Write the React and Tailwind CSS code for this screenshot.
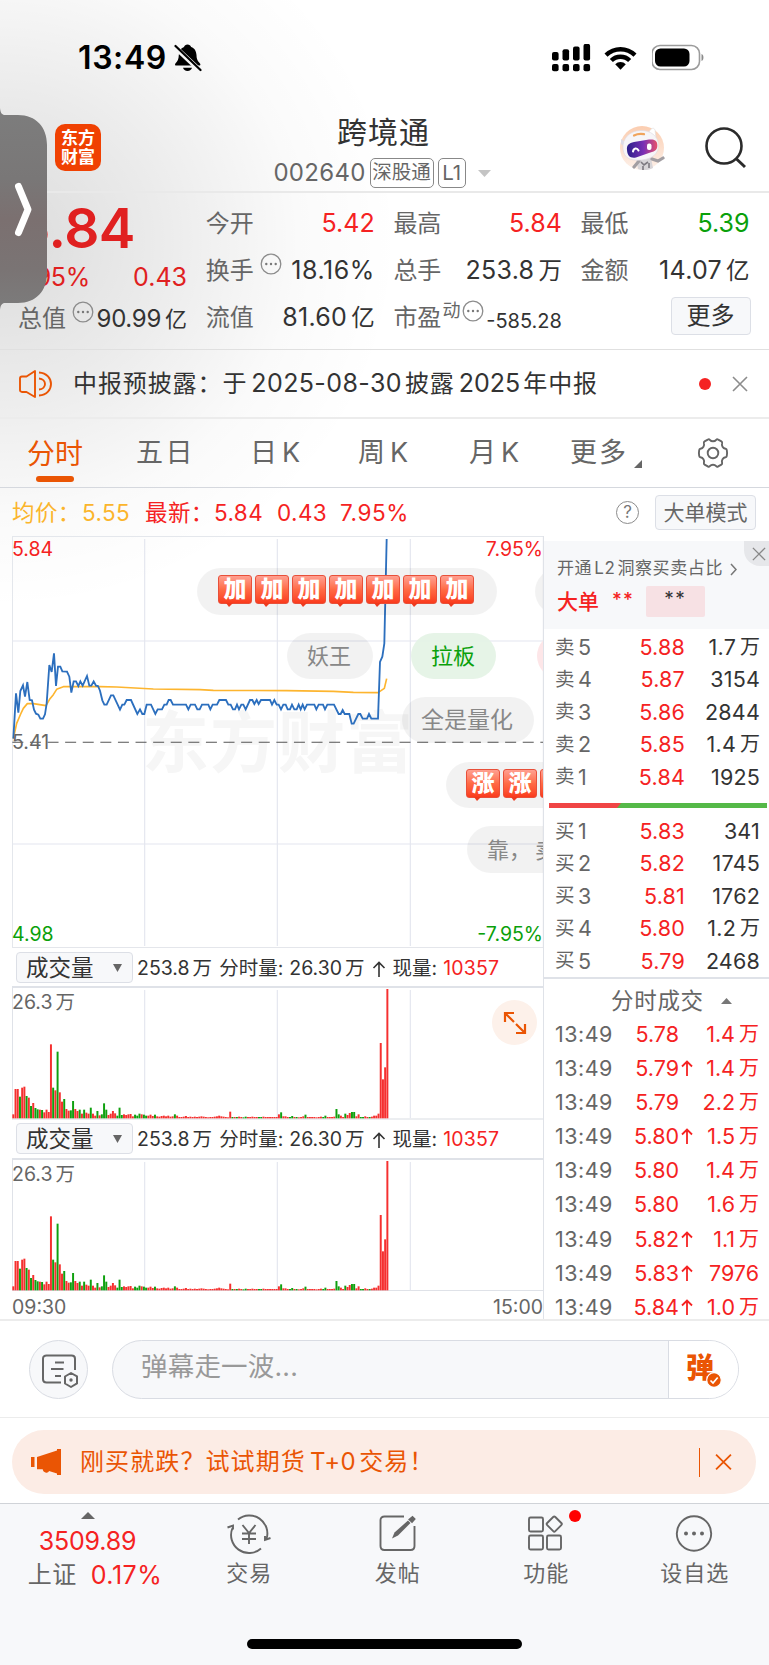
import React from 'react';
import clsx from 'clsx';

const PRICE_LINE =
  '40,626 48,490 55,548 61,483 69,466 75,500 82,456 89,510 96,511 102,539 108,551 115,554 121,566 129,566 135,553 140,520 148,405 155,426 162,370 168,468 174,410 181,410 187,424 201,425 208,440 214,488 221,454 228,454 235,468 241,454 248,467 261,438 268,467 274,467 281,454 288,467 294,468 300,482 307,511 313,524 320,524 333,496 340,496 360,539 367,524 373,524 380,510 393,510 412,552 420,538 427,552 433,552 440,524 453,524 466,552 473,538 486,538 493,524 500,524 506,510 512,510 519,524 558,524 565,538 572,524 585,524 592,538 599,538 606,524 625,524 631,538 638,524 651,524 658,510 678,510 685,524 692,524 699,538 705,538 711,524 717,538 724,524 730,524 737,538 750,510 757,510 763,522 770,510 776,522 783,510 810,510 816,524 823,510 830,524 836,524 843,538 850,524 857,524 863,538 870,538 876,524 883,538 890,538 896,524 902,538 908,524 914,538 921,524 943,524 949,538 956,524 969,524 975,538 982,524 1002,524 1016,552 1022,552 1028,540 1034,552 1048,552 1055,581 1061,581 1075,552 1081,552 1088,566 1101,566 1107,552 1114,566 1134,566 1140,396 1147,380 1153,340 1160,27';

const AVG_LINE =
  '40,626 50,580 62,552 70,535 82,521 100,521 138,527 150,506 160,494 170,478 190,470 300,470 350,471 460,477 600,479 640,481 860,482 1000,484 1060,487 1134,488 1143,482 1153,475 1160,446';

// one entry per minute: r = up, g = down
const VOLUME = (
  'r12 r88 r88 g65 r92 r95 g67 r62 g37 r46 g31 g27 r26 g25 r18 r26 r19 r222 g92 r84 g200 r78 r50 g58 r28 r23 g24 g52 r28 r22 ' +
  'g26 r14 g26 r17 r14 g32 r14 r8 g22 r9 g12 g45 g26 r10 r14 r22 r15 g8 g32 g10 r12 r10 r12 r13 r6 g11 g8 g14 r12 g11 ' +
  'g8 r8 r11 r7 g11 r6 r5 r7 r8 r6 r8 r5 r6 g12 r8 r4 r4 r5 r7 r4 r5 r4 r5 r4 r5 r6 r5 r4 r3 r4 ' +
  'r4 r5 r6 r8 r6 r5 r4 r3 r20 g4 r4 g4 r5 r4 g3 g5 r4 r4 r5 r4 r4 g4 g4 r5 r4 r4 r4 r4 r4 r4 ' +
  'r12 g18 r6 r6 r4 g4 g7 r4 g4 r3 r4 r6 g11 r4 r4 r4 r4 r3 r4 r5 g4 g8 r4 r4 r4 r5 g28 g12 r8 r4 ' +
  'g14 r10 r16 g19 g19 r6 r12 g4 g4 r6 r4 g4 r5 r8 r8 r14 r226 r117 r153 r388'
).split(' ');

const SELLS = [
  ['5', '5.88', '1.7', true],
  ['4', '5.87', '3154'],
  ['3', '5.86', '2844'],
  ['2', '5.85', '1.4', true],
  ['1', '5.84', '1925'],
];

const BUYS = [
  ['1', '5.83', '341'],
  ['2', '5.82', '1745'],
  ['3', '5.81', '1762'],
  ['4', '5.80', '1.2', true],
  ['5', '5.79', '2468'],
];

const TICKS = [
  ['5.78', false, '1.4', true],
  ['5.79', true, '1.4', true],
  ['5.79', false, '2.2', true],
  ['5.80', true, '1.5', true],
  ['5.80', false, '1.4', true],
  ['5.80', false, '1.6', true],
  ['5.82', true, '1.1', true],
  ['5.83', true, '7976', false],
  ['5.84', true, '1.0', true],
];

const DotsIcon = ({ className }) => (
  <svg className={clsx('h-[22px] w-[22px] shrink-0', className)} viewBox="0 0 22 22" fill="none">
    <circle cx="11" cy="11" r="9.8" stroke="#8c8c8c" strokeWidth="1.3" />
    <circle cx="6.3" cy="11" r="1.2" fill="#777" />
    <circle cx="11" cy="11" r="1.2" fill="#777" />
    <circle cx="15.7" cy="11" r="1.2" fill="#777" />
  </svg>
);

const CloseIcon = ({ className, width = 1.6 }) => (
  <svg className={className} viewBox="0 0 16 16" fill="none" stroke="currentColor" strokeWidth={width}>
    <path d="M1 1L15 15M15 1L1 15" />
  </svg>
);

const StatusBar = () => (
  <div className="flex h-[108px] items-center pl-[78px] pr-[64px] pt-[7px] text-black">
    <span className="text-[32px] font-semibold leading-none tracking-[0.6px]">13:49</span>
    <svg className="ml-[7px] h-[28px] w-[28px]" viewBox="0 0 28 28">
      <path d="M13.5 0.5c1.800 0 3.200 1 3.600 2.400 3.600 1.200 5.200 4.300 5.400 8.100.1 4.500 1.300 6.300 3.500 8.400.7.800.5 2.100-.7 2.100H2.200c-1.300 0-1.500-1.300-.8-2.100 2.200-2.100 3.300-4 3.400-8.400.2-3.800 1.700-6.900 5.200-8.100.4-1.400 1.800-2.400 3.500-2.400z" />
      <path d="M9 23.800h9c-.5 1.900-2.200 3.200-4.500 3.200s-4-1.300-4.500-3.200z" />
      <path d="M0 2L27 27.500" stroke="#f6f6f6" strokeWidth="5" />
      <path d="M1.500 2L26.500 26" stroke="#000" strokeWidth="2.2" strokeLinecap="round" />
    </svg>
    <svg className="ml-auto h-[28px] w-[39px]" viewBox="0 0 39 28">
      {[0, 1, 2, 3].map((i) => (
        <g key={i}>
          <rect x={i * 10.5} y={8 - i * 2.7} width="6.6" height={8.5 + i * 2.7} rx="2" />
          <rect x={i * 10.5} y="20" width="6.6" height="7.2" rx="2" />
        </g>
      ))}
    </svg>
    <svg className="ml-[13px] h-[25px] w-[33px]" viewBox="0 0 33 25">
      <path d="M0.5 8.5a23 23 0 0 1 32 0l-3 3.300a18.500 18.500 0 0 0-26 0z" />
      <path d="M5.800 13.900a15.200 15.200 0 0 1 21.400 0l-3.100 3.200a10.800 10.800 0 0 0-15.200 0z" />
      <path d="M11.200 19.200a7.600 7.600 0 0 1 10.600 0L16.500 24.700z" />
    </svg>
    <svg className="ml-[15px] mr-[-1px] h-[27px] w-[54px]" viewBox="0 0 54 27">
      <rect x="0" y="1.5" width="47.5" height="24" rx="8" fill="none" stroke="#9b9b9b" strokeWidth="1.6" />
      <rect x="3" y="4.5" width="34.5" height="18" rx="5.5" />
      <path d="M49.5 10c2.600.8 2.600 6.200 0 7z" fill="#8a8a8a" />
    </svg>
  </div>
);

const Robot = () => (
  <svg className="h-[46px] w-[46px]" viewBox="0 0 46 46">
    <defs>
      <linearGradient id="visor" x1="0" x2="1">
        <stop offset="0" stopColor="#2b1f8a" />
        <stop offset=".55" stopColor="#7a2fb5" />
        <stop offset="1" stopColor="#e8506a" />
      </linearGradient>
      <linearGradient id="halo" x1="0" x2="0" y1="0" y2="1">
        <stop offset="0" stopColor="#fbcdb0" />
        <stop offset="1" stopColor="#fdf1ea" />
      </linearGradient>
    </defs>
    <circle cx="23" cy="23" r="22" fill="url(#halo)" />
    <path d="M17 33h15l2 10c-3 2-10 3-15 1z" fill="#d8d5d8" />
    <path d="M20 36l-5 6M33 34l6 2 5-3" stroke="#a29ea2" strokeWidth="3.2" fill="none" strokeLinecap="round" />
    <path d="M22 37l3 3 4-3M24 41v4M30 38v5" stroke="#7d7980" strokeWidth="1.6" fill="none" />
    <path d="M30 7c2-4 5-5 6-2l1 8-5-2z" fill="#fff" stroke="#ddd" strokeWidth=".6" />
    <path d="M2 14l3 2 1 6-4-3z" fill="#dcdce6" />
    <path d="M4 24C3 13 11 6 21 5.500c11-.5 18 6 18.500 14 .5 9-6 14.500-17 15.500C11 36 5 33 4 24z" fill="#f6f5f8" stroke="#ddd9df" strokeWidth=".6" />
    <path d="M8 25c-.5-5 2-7 7-8l15-2.500c5.500-.5 8 1 8.300 5 .4 5-2 7-7 8L17 32.500c-5.500.8-8.500-1-9-7.500z" fill="url(#visor)" />
    <path d="M14 26.500c.6-3.500 4-4 5.500-1" stroke="#fff" strokeWidth="2" fill="none" strokeLinecap="round" />
    <rect x="28" y="18.500" width="4.500" height="6.500" rx="2" fill="#fff" />
    <path d="M15 10.500c3-1.500 7-1.800 10-1.300" stroke="#f0a45c" strokeWidth="2.200" fill="none" strokeLinecap="round" />
  </svg>
);

const Header = () => (
  <div className="grid h-[85px] grid-cols-[200px_369px_200px] border-b-2 border-[#e9e9e9]">
    <div className="pl-[55px] pt-[16px]">
      <div className="flex h-[47px] w-[46px] flex-col items-center justify-center rounded-[10px] bg-[#f04102] text-[17px] font-bold leading-[19px] text-white">
        <span>东方</span>
        <span>财富</span>
      </div>
    </div>
    <div className="flex flex-col items-center pt-[6px]">
      <h1 className="-ml-[2px] text-[30px] leading-[36px] tracking-[1px] text-[#333]">跨境通</h1>
      <div className="-ml-[5px] mt-[8px] flex h-[30px] items-center text-[#666]">
        <span className="text-[24px] tracking-[0.3px]">002640</span>
        <span className="ml-[4px] flex h-[30px] w-[64px] items-center justify-center rounded-[5px] border border-[#888] text-[19.5px]">深股通</span>
        <span className="ml-[4px] flex h-[30px] w-[28px] items-center justify-center rounded-[5px] border border-[#888] text-[20.5px]">L1</span>
        <svg className="ml-[12px] h-[7px] w-[13px]" viewBox="0 0 13 7">
          <path d="M0 0h13L6.5 7z" fill="#c4c4c4" />
        </svg>
      </div>
    </div>
    <div className="flex items-start pl-[50px] pt-[17px]">
      <Robot />
      <svg className="ml-[40px] mt-px h-[43px] w-[43px]" viewBox="0 0 43 43" fill="none" stroke="#2b2b2b" strokeWidth="2.6">
        <circle cx="19" cy="20" r="17.5" />
        <path d="M31 32.5l9 8.5" strokeWidth="3" />
      </svg>
    </div>
  </div>
);

const Quote = ({ label, value, unit, color = 'text-[#333]', dots }) => (
  <div className="flex h-[47px] items-center">
    <span className="text-[24px] text-[#666]">{label}</span>
    {dots && <DotsIcon className="mb-[14px] ml-[6px]" />}
    <span className={clsx('ml-auto text-[25px]', color, dots && 'tracking-[0.5px]', unit && 'tracking-[0.3px]')}>{value}</span>
    {unit && <span className="ml-[4px] text-[23.5px] text-[#333]">{unit}</span>}
  </div>
);

const Quotes = () => (
  <div className="grid h-[157px] grid-cols-[169px_169px_168.5px_169px] gap-x-[18.700px] border-b border-[#e0e0e0] pl-[18px] pt-[7px]">
    <div className="text-[#e02020]">
      <div className="flex h-[56px] items-center justify-end pr-[52px] text-[55px] font-semibold tracking-[-0.5px]">5.84</div>
      <div className="flex h-[43px] items-center text-[25px]">
        <span className="w-[72px] whitespace-nowrap text-right">
          <span className="-ml-6 tracking-[-0.3px]">7.95%</span>
        </span>
        <span className="ml-auto">0.43</span>
      </div>
      <div className="flex h-[40px] items-center whitespace-nowrap text-[#333]">
        <span className="text-[24px] text-[#666]">总值</span>
        <DotsIcon className="mb-[14px] ml-[6px]" />
        <span className="ml-auto text-[24px] tracking-[-0.3px]">90.99</span>
        <span className="ml-[4px] text-[22px]">亿</span>
      </div>
    </div>
    <div>
      <Quote label="今开" value="5.42" color="text-[#f52222]" />
      <Quote label="换手" value="18.16%" dots />
      <Quote label="流值" value="81.60" unit="亿" />
    </div>
    <div>
      <Quote label="最高" value="5.84" color="text-[#f52222]" />
      <Quote label="总手" value="253.8" unit="万" />
      <div className="flex h-[47px] items-center text-[#666]">
        <span className="text-[24px]">市盈</span>
        <span className="mb-[15px] ml-px text-[18px]">动</span>
        <DotsIcon className="mb-[14px] ml-[2px]" />
        <span className="ml-auto mt-[6px] text-[20px] text-[#333]">-585.28</span>
      </div>
    </div>
    <div>
      <Quote label="最低" value="5.39" color="text-[#0aa00a]" />
      <Quote label="金额" value="14.07" unit="亿" />
      <div className="ml-[90px] mt-[3px] flex h-[38px] w-[80px] items-center justify-center rounded-[4px] border border-[#dcdfe6] bg-[#f7f8fa] text-[24px] text-[#333]">
        更多
      </div>
    </div>
  </div>
);

const Notice = () => (
  <div className="flex h-[69px] items-center border-b-2 border-[#ececec] pl-[19px] pr-[21px]">
    <svg className="h-[30px] w-[34px]" viewBox="0 0 34 30" fill="none" stroke="#ea5504" strokeWidth="1.9" strokeLinejoin="round">
      <path d="M3 7.500h4.500L16 2v26l-8.500-5H3c-1.200 0-2-.8-2-2V9.500c0-1.200.8-2 2-2z" />
      <path d="M20 3.500c16 1 16 22 0 23" />
      <path d="M20 9.500c8 .5 8 10.500 0 11" />
    </svg>
    <span className="ml-[20px] flex items-center text-[24px] tracking-[0.9px] text-[#333]">
      中报预披露：于
      <span className="ml-[4px] text-[25px] tracking-[0.4px]">2025-08-30</span>
      <span className="ml-[3px]">披露</span>
      <span className="ml-[4px] text-[25px] tracking-[0px]">2025</span>
      <span className="ml-[3px]">年中报</span>
    </span>
    <span className="ml-auto h-[12px] w-[12px] rounded-full bg-[#f52222]" />
    <CloseIcon className="ml-[21px] h-[16px] w-[16px] text-[#8c8c8c]" />
  </div>
);

const Tabs = () => (
  <div className="grid h-[69px] grid-cols-[110px_107px_116px_104px_112px_105px_115px] items-center border-b border-[#d5d8de] pt-px text-[27px] text-[#666]">
    <div className="relative flex h-full items-center justify-center text-[28px] text-[#ea5504]">
      分时
      <span className="absolute bottom-[5px] left-[36px] h-[6px] w-[38px] rounded-full bg-[#ea5504]" />
    </div>
    <span className="pl-[26px] tracking-[2.5px]">五日</span>
    <span className="pl-[33px] tracking-[-1px]">日<span className="ml-[6px]">K</span></span>
    <span className="pl-[25px] tracking-[-1px]">周<span className="ml-[6px]">K</span></span>
    <span className="pl-[32px] tracking-[-1px]">月<span className="ml-[6px]">K</span></span>
    <span className="flex items-center pl-[21px] tracking-[2px]">
      更多
      <svg className="ml-[6px] mt-[20px] h-[8px] w-[8px] shrink-0" viewBox="0 0 8 8">
        <path d="M8 0v8H0z" fill="#666" />
      </svg>
    </span>
    <svg className="-mt-px ml-[43px] h-[32px] w-[32px]" viewBox="0 0 32 32" fill="none" stroke="#666" strokeWidth="1.9">
      <circle cx="16" cy="16" r="5.3" />
      <path strokeLinejoin="round" d="M10.800 2.600c.7-.5 1.500-.4 2 .2 1.700 2 4.700 2 6.400 0 .5-.6 1.300-.7 2-.2l3.200 1.800c.7.400.9 1 .7 1.800-.8 2.400.8 5 3.400 5.500.8.200 1.200.7 1.300 1.400.4 2 .4 3.800 0 5.800-.1.700-.5 1.200-1.300 1.400-2.600.5-4.200 3.100-3.400 5.500.2.800 0 1.400-.7 1.800l-3.200 1.800c-.7.500-1.500.400-2-.2-1.700-2-4.700-2-6.400 0-.5.6-1.300.7-2 .2l-3.200-1.800c-.7-.4-.9-1-.7-1.800.8-2.400-.8-5-3.400-5.500-.8-.2-1.200-.7-1.300-1.400-.4-2-.4-3.800 0-5.800.1-.7.5-1.200 1.300-1.400 2.600-.5 4.200-3.100 3.400-5.500-.2-.8 0-1.400.7-1.800z" />
    </svg>
  </div>
);

const InfoRow = () => (
  <div className="flex h-[48px] items-center pl-[12px] pr-[13px] pt-px">
    <div className="grid grid-cols-[70px_63px_69px_63px_63px_70px] whitespace-nowrap text-[22.5px] tracking-[0.4px] text-[#f52222]">
      <span className="text-[#fbb52c]">均价：</span>
      <span className="text-[#fbb52c]">5.55</span>
      <span>最新：</span>
      <span>5.84</span>
      <span>0.43</span>
      <span className="tracking-[0.6px]">7.95%</span>
    </div>
    <span className="ml-auto flex h-[23px] w-[23px] items-center justify-center rounded-full border border-[#8c8c8c] text-[17px] leading-none text-[#777]">?</span>
    <span className="ml-[16px] flex h-[35px] w-[101px] items-center justify-center rounded-[4px] border border-[#dcdfe6] bg-[#f7f8fa] text-[21px] text-[#666]">
      大单模式
    </span>
  </div>
);

const Bubble = ({ char, className }) => (
  <span className={clsx('relative flex h-[29px] w-[34px] shrink-0 items-center justify-center rounded-[3px] border border-[#e8503a] bg-linear-to-b from-[#ff9f90] via-[#ff6a45] to-[#fa3a1c] text-[23px] font-black leading-none text-white', className)}>
    {char}
    <svg className="absolute -bottom-[4px] left-[7px] h-[4px] w-[7px]" viewBox="0 0 7 4">
      <path d="M0 0h7L3 4z" fill="#ee3a1e" />
    </svg>
  </span>
);

const PriceChart = () => (
  <div className="relative h-[412px] overflow-hidden text-[19.5px] leading-none">
    <span className="absolute left-[130px] top-[173px] whitespace-nowrap text-[67px] font-bold tracking-[1px] text-[#f6f6f6]">东方财富</span>
    <svg className="absolute inset-0 h-[412px] w-[532px]" viewBox="36 18 1596 1236" fill="none">
      <path d="M37 19H1630V1253H37z" stroke="#dfe2e8" strokeWidth="3" />
      <path d="M434 27V1248M832 27V1248M1231 27V1248M37 333H1630M37 942H1630" stroke="#e4e6ef" strokeWidth="3.5" />
      <path d="M37 637H1630" stroke="#555" strokeWidth="3.2" strokeDasharray="33 19.8" />
      <polyline points={AVG_LINE} stroke="#fdb52f" strokeWidth="5" strokeLinejoin="round" />
      <polyline points={PRICE_LINE} stroke="#2c6fbe" strokeWidth="5.5" />
    </svg>
    <span className="absolute left-0 top-[4px] text-[#f52222]">5.84</span>
    <span className="absolute right-0 top-[4px] text-[#f52222]">7.95%</span>
    <span className="absolute left-0 top-[197px] text-[#666]">5.41</span>
    <span className="absolute bottom-[4px] left-0 text-[#0aa00a]">4.98</span>
    <span className="absolute bottom-[4px] right-0 text-[#0aa00a]">-7.95%</span>

    {/* danmaku */}
    <div className="absolute left-[185px] top-[32px] flex h-[47px] w-[300px] items-center gap-[3px] rounded-full bg-black/5 pb-[4px] pl-[21px]">
      {[0, 1, 2, 3, 4, 5, 6].map((i) => (
        <Bubble key={i} char="加" />
      ))}
    </div>
    <div className="absolute left-[523px] top-[32px] h-[47px] w-[80px] rounded-full bg-black/5" />
    <div className="absolute left-[275px] top-[97px] flex h-[46px] w-[86px] items-center justify-center rounded-full bg-black/5 pr-[2px] text-[22px] text-[#888]">妖王</div>
    <div className="absolute left-[399px] top-[97px] flex h-[46px] w-[85px] items-center justify-center rounded-full bg-[#e3f3e4]/90 pr-px text-[22px] text-[#0aa00a]">拉板</div>
    <div className="absolute left-[525px] top-[97px] h-[46px] w-[85px] rounded-full bg-[#fde6e8]" />
    <div className="absolute left-[390px] top-[161px] flex h-[46px] w-[132px] items-center justify-center rounded-full bg-black/5 pr-[2px] pt-px text-[23px] text-[#888]">全是量化</div>
    <div className="absolute left-[434px] top-[226px] flex h-[46px] w-[200px] items-center gap-[3px] rounded-full bg-black/5 pb-[4px] pl-[20px]">
      <Bubble char="涨" />
      <Bubble char="涨" />
      <Bubble />
    </div>
    <div className="absolute left-[455px] top-[290px] flex h-[47px] w-[200px] items-center whitespace-nowrap rounded-full bg-black/5 pl-[20px] pt-px text-[22px] text-[#888]">
      靠，<span className="ml-[4px]">卖</span>
    </div>
  </div>
);

const VolumeChart = ({ expand, last }) => (
  <div>
    <div className="flex h-[38px] items-center whitespace-nowrap text-[19.5px] text-[#333]">
      <span className="ml-[4px] flex h-[31px] w-[117px] items-center rounded-[4px] border border-[#dcdfe6] bg-[#f7f8fa] pl-[9px] pt-px text-[22.5px]">
        成交量
        <svg className="ml-auto mr-[10px] h-[8px] w-[9px]" viewBox="0 0 9 8">
          <path d="M0 0h9L4.500 8z" fill="#666" />
        </svg>
      </span>
      <div className="flex items-center pt-[3px]">
        <span className="ml-[4px]">253.8</span>
        <span className="ml-[3px]">万</span>
        <span className="ml-[7px]">分时量:</span>
        <span className="ml-[6px]">26.30</span>
        <span className="ml-[3px]">万</span>
        <svg className="ml-[7px] h-[16px] w-[14px]" viewBox="0 0 14 16" fill="none" stroke="#333" strokeWidth="1.6">
          <path d="M7 16V1.500M1.500 7L7 1.500L12.500 7" />
        </svg>
        <span className="ml-[7px]">现量:</span>
        <span className="ml-[6px] tracking-[0.2px] text-[#f52222]">10357</span>
      </div>
    </div>
    <div className={clsx('relative h-[133.5px] border-l border-t-2 border-[#dfe2e8]', last ? 'border-b' : 'border-b-2 border-b-[#eceef1]')}>
      <svg className="absolute -left-px top-0 h-[131px] w-[532px]" viewBox="36 0 1596 393">
        <path d="M434 6V391M832 6V391M1231 6V391" stroke="#e4e6ef" strokeWidth="3.5" />
        {VOLUME.map((bar, i) => {
          const h = Number(bar.slice(1));
          return <rect key={i} x={37 + i * 6.64} y={391 - h} width="5.9" height={h} fill={bar[0] === 'r' ? '#f5302f' : '#0fa00f'} />;
        })}
      </svg>
      <div className="absolute -left-px top-0 flex items-center text-[19.5px] leading-[28px] text-[#666]">
        26.3<span className="ml-[3px]">万</span>
      </div>
      {expand && (
        <div className="absolute right-[6px] top-[12px] flex h-[45px] w-[45px] items-center justify-center rounded-full bg-[#fdf1ea]">
          <svg className="h-[24px] w-[24px]" viewBox="0 0 24 24" fill="none" stroke="#ea5504" strokeWidth="2.2">
            <path d="M2 11V2h9M2 2l9 9M22 13v9h-9M22 22l-9-9" />
          </svg>
        </div>
      )}
    </div>
  </div>
);

const BookRow = ({ side, row }) => (
  <div className="grid h-[32.4px] grid-cols-[60px_70px_75px] items-center pl-[11px] text-[21.5px] text-[#333]">
    <span className="flex items-center text-[#666]">
      <span className="w-[23px] text-[19.5px]">{side}</span>
      {row[0]}
    </span>
    <span className="text-right tracking-[0.2px] text-[#f52222]">{row[1]}</span>
    <span className="flex items-center justify-end">
      <span className="tracking-[0.2px]">{row[2]}</span>
      {row[3] && <span className="ml-[4px] text-[20px]">万</span>}
    </span>
  </div>
);

const OrderBook = () => (
  <div className="h-[783px] w-[225px]">
    <div className="relative mt-[5px] h-[88px] bg-[#f7f8fa] pl-[13px]">
      <div className="absolute right-0 top-0 flex h-[25px] w-[25px] items-center justify-center rounded-bl-[16px] bg-[#e6e7ea] pl-[5px]">
        <CloseIcon className="h-[14px] w-[14px] text-[#888]" width={1.5} />
      </div>
      <div className="flex h-[56px] items-center whitespace-nowrap text-[17px] tracking-[0.6px] text-[#666]">
        开通<span className="mx-[2px]">L2</span>洞察买卖占比
        <svg className="ml-[7px] h-[13px] w-[7px]" viewBox="0 0 7 13" fill="none" stroke="#777" strokeWidth="1.5">
          <path d="M1 1l5 5.500L1 12" />
        </svg>
      </div>
      <div className="-mt-[11px] flex h-[31px] items-center font-medium text-[#f52222]">
        <span className="text-[21px]">大单</span>
        <span className="mb-[3px] ml-[13px] text-[19px] tracking-[1px]">**</span>
        <span className="ml-[12px] flex h-[31px] w-[59px] items-center justify-center rounded-[2px] bg-[#f7e1e4] pb-[4px] text-[19px] font-normal tracking-[1.5px] text-[#333]">**</span>
      </div>
    </div>
    <div className="pt-[2px]">
      {SELLS.map((row) => (
        <BookRow key={row[0]} side="卖" row={row} />
      ))}
    </div>
    <div className="mb-[7px] ml-[5px] mt-[10px] flex h-[5px] w-[218px]">
      <svg className="h-[5px] w-[218px]" viewBox="0 0 218 5">
        <path d="M0 0h218v5H0z" fill="#55b948" />
        <path d="M0 0h72l-4 5H0z" fill="#f04545" />
      </svg>
    </div>
    <div className="h-[162px]">
      {BUYS.map((row) => (
        <BookRow key={row[0]} side="买" row={row} />
      ))}
    </div>
    <div className="flex h-[39.5px] items-center border-t-2 border-[#dfe2e8] pl-[67px] pt-[6px] text-[22.5px] tracking-[0.7px] text-[#666]">
      分时成交
      <svg className="ml-[17px] h-[6px] w-[11px]" viewBox="0 0 11 6">
        <path d="M0 6h11L5.500 0z" fill="#777" />
      </svg>
    </div>
    {TICKS.map((t, i) => (
      <div key={i} className="grid h-[34.2px] grid-cols-[76px_49px_79px] items-center pl-[11px] text-[21.5px] leading-[32px] text-[#f52222]">
        <span className="tracking-[0.5px] text-[#666]">13:49</span>
        <span className="flex items-center justify-end whitespace-nowrap pr-px">
          <span>{t[0]}</span>
          <span className="relative">
            {t[1] && (
              <svg className="absolute -top-[8px] left-[2px] h-[16px] w-[12px]" viewBox="0 0 12 16" fill="none" stroke="#f52222" strokeWidth="1.8">
                <path d="M6 16V1.500M1 6.500L6 1.500L11 6.500" />
              </svg>
            )}
          </span>
        </span>
        <span className="flex items-center justify-end">
          <span>{t[2]}</span>
          {t[3] && <span className="ml-[4px] text-[20px]">万</span>}
        </span>
      </div>
    ))}
  </div>
);

const CommentBar = () => (
  <div className="flex h-[99px] items-center border-b border-t-2 border-[#ececec] pl-[29px]">
    <div className="flex h-[59px] w-[59px] items-center justify-center rounded-full border border-[#d9dce3] bg-[#f7f8fa]">
      <svg className="ml-[3px] mt-[3px] h-[34px] w-[37px]" viewBox="0 0 37 34" fill="none" stroke="#666" strokeWidth="2">
        <path d="M19 28.500H4.500c-2 0-3.500-1.200-3.500-3.200V4.700C1 2.700 2.500 1.500 4.500 1.500h25c2 0 3.500 1.200 3.500 3.200V16" />
        <path d="M13 8.500h9M9 15h12.500M13 22h6" />
        <path d="M29 19l6 3.400v7L29 33l-6-3.500v-7z" strokeLinejoin="round" />
        <circle cx="29" cy="26" r="1.7" fill="#666" stroke="none" />
      </svg>
    </div>
    <div className="ml-[24px] flex h-[59px] w-[627px] items-center overflow-hidden rounded-full border border-[#d9dce3] bg-[#f7f8fa]">
      <span className="mb-[4px] pl-[28px] text-[26.5px] tracking-[0.2px] text-[#999]">弹幕走一波...</span>
      <div className="relative ml-auto flex h-full w-[70px] items-center border-l border-[#d9dce3] bg-white pl-[17px] text-[28px] font-black leading-none text-[#ea5504]">
        <span className="mb-[2px]">弹</span>
        <svg className="absolute bottom-[10px] left-[37px] h-[16px] w-[16px]" viewBox="0 0 16 16">
          <circle cx="8" cy="8" r="7.3" fill="#ea5504" stroke="#fff" strokeWidth="1.2" />
          <path d="M4.500 8.500l2.500 2.500 4.700-5.500" stroke="#fff" strokeWidth="1.7" fill="none" />
        </svg>
      </div>
    </div>
  </div>
);

const Banner = () => (
  <div className="px-[12px] pb-[9px] pt-[12px]">
    <div className="flex h-[64px] w-[744px] items-center rounded-full bg-[#fcece5] pl-[19px] pr-[24px] text-[#ea5504]">
      <svg className="h-[26px] w-[31px]" viewBox="0 0 31 26" fill="#ea5504">
        <path d="M0 8h3.500v10H0zM6 8L26 1.500V0h4v26h-4v-1.500l-8-2.500c-.5 1.500-2 2-3.500 1.500s-2.500-1.500-2.800-3.300H6z" />
      </svg>
      <span className="ml-[18px] flex items-center text-[24px] tracking-[1.1px]">
        刚买就跌？试试期货
        <span className="ml-[4px] tracking-[0.5px]">T+0</span>
        <span className="ml-[3px]">交易！</span>
      </span>
      <span className="ml-auto h-[29px] w-[1.5px] bg-[#ea5504]" />
      <CloseIcon className="ml-[15px] h-[18px] w-[17px]" width={1.7} />
    </div>
  </div>
);

const NavItem = ({ label, children, badge }) => (
  <div className="relative flex flex-col items-center pt-[9px] text-[22px] text-[#666]">
    <svg className="h-[42px] w-[44px]" viewBox="0 0 44 42" fill="none" stroke="#666" strokeWidth="1.9">
      {children}
    </svg>
    <span className="mt-[2px] leading-[32px] tracking-[1px]">{label}</span>
    {badge && <span className="absolute left-[97px] top-[6px] h-[12px] w-[12px] rounded-full bg-[#ff0000]" />}
  </div>
);

const BottomBar = () => (
  <div className="h-[162px] border-t border-[#d0d3d8] bg-[#f7f8fa]">
    <div className="grid h-[135px] grid-cols-[175px_148.5px_148.5px_148.5px_148.5px]">
      <div className="flex flex-col items-center pt-[8px] text-[25px] text-[#f52222]">
        <svg className="h-[7px] w-[14px]" viewBox="0 0 14 7">
          <path d="M0 7h14L7 0z" fill="#666" />
        </svg>
        <span className="mt-[5px] leading-[34px] tracking-[-0.2px]">3509.89</span>
        <span className="ml-[15px] flex items-center leading-[34px]">
          <span className="text-[24px] tracking-[0.5px] text-[#666]">上证</span>
          <span className="ml-[14px] tracking-[0.5px]">0.17%</span>
        </span>
      </div>
      <NavItem label="交易">
        <path d="M11 6.500a18 18 0 0 1 28.500 19.500M34 35.500A18 18 0 0 1 5.500 15" />
        <path d="M0.500 14.500l5.500-2v4M43.500 25l-5.500 2v-4" />
        <path d="M15.500 12l6.500 8 6.500-8M22 20v11M15 20.500h14M15 26h14" />
      </NavItem>
      <NavItem label="发帖">
        <path d="M28 3.500H8.500C6 3.500 4.500 5 4.500 7v26c0 2.500 1.500 4 4 4h26c2.500 0 4-1.500 4-4V13" />
        <path d="M16 25.500l2.500-6L32 7.500l2.500 2.500-12.500 12.500z" fill="#666" stroke="none" />
        <path d="M33.500 6.500l3-2.500 2 2-2.500 2.800z" fill="#666" />
      </NavItem>
      <NavItem label="功能" badge>
        <rect x="5" y="4.5" width="14" height="14" rx="1.5" />
        <rect x="5" y="22.5" width="14" height="14" rx="1.5" />
        <rect x="23" y="22.5" width="14" height="14" rx="1.5" />
        <rect x="24.5" y="5.3" width="11.5" height="11.5" rx="1.5" transform="rotate(45 30.25 11.05)" />
      </NavItem>
      <NavItem label="设自选">
        <circle cx="21" cy="20.5" r="17.2" />
        <g fill="#666" stroke="none">
          <circle cx="13" cy="20.5" r="2" />
          <circle cx="21" cy="20.5" r="2" />
          <circle cx="29" cy="20.5" r="2" />
        </g>
      </NavItem>
    </div>
    <div className="mx-auto h-[10px] w-[275px] rounded-full bg-black" />
  </div>
);

const SideDrawer = () => (
  <svg className="absolute left-0 top-[108px] h-[202px] w-[48px]" viewBox="0 0 48 202">
    <defs>
      <linearGradient id="drawer" x1="0" x2="0" y1="0" y2="1">
        <stop offset="0" stopColor="#7d7d7d" />
        <stop offset=".35" stopColor="#797777" />
        <stop offset=".55" stopColor="#7b7070" />
        <stop offset=".8" stopColor="#7a7474" />
        <stop offset="1" stopColor="#7c7c7c" />
      </linearGradient>
    </defs>
    <path d="M0 0c.5 5 2 7 5 7h13c18 0 29 12 29 30v128c0 18-11 30-29 30H5c-3 0-4.500 2-5 7z" fill="url(#drawer)" />
    <path d="M18.500 78.500l9.500 23-9.500 23" fill="none" stroke="#fff" strokeWidth="7" strokeLinecap="round" strokeLinejoin="round" />
  </svg>
);

export default function App() {
  return (
    <div className="relative isolate h-[1665px] w-[769px] overflow-hidden bg-white font-['Inter','Noto_Sans_CJK_SC',sans-serif]">
      {/* soft shadow cast by the drawer */}
      <div className="pointer-events-none absolute left-0 top-0 -z-10 h-[640px] w-[420px] bg-[radial-gradient(ellipse_400px_370px_at_0px_240px,rgba(0,0,0,0.14),rgba(0,0,0,0.08)_40%,rgba(0,0,0,0.02)_75%,transparent)]" />
      <StatusBar />
      <Header />
      <Quotes />
      <Notice />
      <Tabs />
      <InfoRow />
      <div className="flex h-[783px]">
        <div className="ml-[12px] w-[532px] border-r border-[#dfe2e8]">
          <PriceChart />
          <VolumeChart expand />
          <VolumeChart last />
          <div className="flex h-[28px] items-center justify-between pt-[5px] text-[19.5px] text-[#666]">
            <span>09:30</span>
            <span>15:00</span>
          </div>
        </div>
        <OrderBook />
      </div>
      <CommentBar />
      <Banner />
      <BottomBar />
      <SideDrawer />
    </div>
  );
}
